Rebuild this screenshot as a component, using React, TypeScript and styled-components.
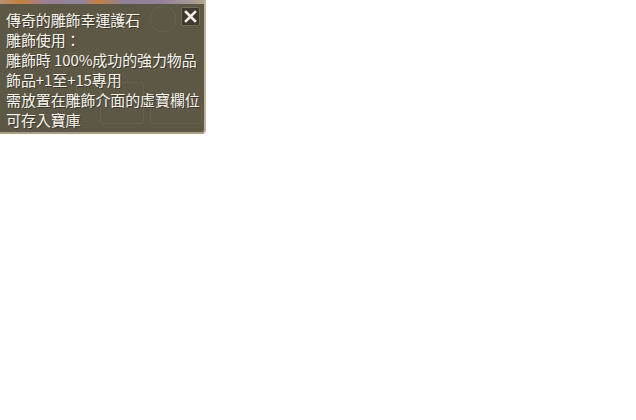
import styled, { createGlobalStyle } from "styled-components";

const GlobalStyle = createGlobalStyle`
  html, body {
    margin: 0;
    padding: 0;
    background: #ffffff;
  }
`;

const Tooltip = styled.div`
  position: relative;
  width: 206px;
  height: 134px;
  box-sizing: border-box;
  background: #5d5745;
  border-right: 2px solid #bdb49c;
  border-bottom: 2px solid #a89f86;
  border-bottom-right-radius: 4px;
  overflow: hidden;
  font-family: "Noto Sans CJK TC", "Noto Sans", sans-serif;
`;

const TopStrip = styled.div`
  height: 4px;
  background: linear-gradient(
    90deg,
    #c9a27a 0%,
    #e08a3c 10%,
    #a98aa8 22%,
    #9b8fb6 40%,
    #e08a3c 48%,
    #9d8ab0 60%,
    #a48bb0 80%,
    #c7b7a4 100%
  );
  opacity: 0.8;
`;

const Body = styled.div`
  padding: 6px 0 0 6px;
`;

const Line = styled.div`
  color: #f6f4ee;
  font-size: 15px;
  line-height: 20px;
  height: 20px;
  letter-spacing: -0.1px;
  white-space: nowrap;
  text-shadow: 1px 1px 0 rgba(40, 36, 26, 0.6);
`;

const CloseButton = styled.div`
  position: absolute;
  top: 7px;
  left: 181px;
  width: 19px;
  height: 19px;
  border-radius: 2px;
  background: #3f382e;
  border: 1px solid #746a58;
  box-sizing: border-box;
  display: flex;
  align-items: center;
  justify-content: center;
`;

const Ghost = styled.div`
  position: absolute;
  border: 1px solid rgba(120, 112, 90, 0.35);
  border-radius: 3px;
`;

const lines = [
  "傳奇的雕飾幸運護石",
  "雕飾使用：",
  "雕飾時 100%成功的強力物品",
  "飾品+1至+15專用",
  "需放置在雕飾介面的虛寶欄位",
  "可存入寶庫",
];

export default function App() {
  return (
    <>
      <GlobalStyle />
      <Tooltip>
        <TopStrip />
        <Ghost style={{ left: 150, top: 6, width: 24, height: 24, borderRadius: 12 }} />
        <Ghost style={{ left: 100, top: 82, width: 42, height: 40 }} />
        <Ghost style={{ left: 150, top: 102, width: 50, height: 20 }} />
        <Body>
          {lines.map((t) => (
            <Line key={t}>{t}</Line>
          ))}
        </Body>
        <CloseButton>
          <svg width="13" height="13" viewBox="0 0 13 13">
            <path
              d="M2 2 L11 11 M11 2 L2 11"
              stroke="#f2ede4"
              strokeWidth="2.6"
              strokeLinecap="square"
            />
          </svg>
        </CloseButton>
      </Tooltip>
    </>
  );
}
